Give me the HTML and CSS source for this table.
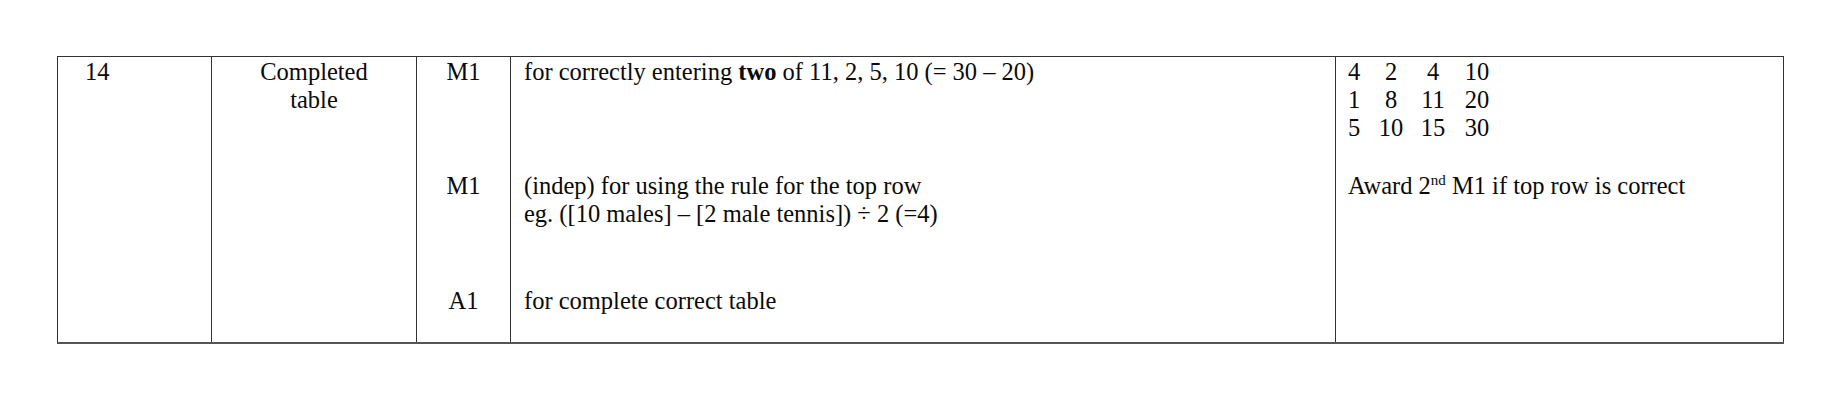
FILE: index.html
```html
<!DOCTYPE html>
<html>
<head>
<meta charset="utf-8">
<link rel="stylesheet" href="styles.css">
</head>
<body>
<table class="scheme">
  <colgroup>
    <col class="c-q">
    <col class="c-work">
    <col class="c-mark">
    <col class="c-notes">
    <col class="c-ans">
  </colgroup>
  <tr class="r1">
    <td class="q">14</td>
    <td class="work">Completed<br>table</td>
    <td class="mark">M1</td>
    <td class="notes">for correctly entering <b>two</b> of 11, 2, 5, 10 (= 30 – 20)</td>
    <td class="ans">
      <div class="grid">
        <span>4</span><span>2</span><span>4</span><span>10</span>
        <span>1</span><span>8</span><span>11</span><span>20</span>
        <span>5</span><span>10</span><span>15</span><span>30</span>
      </div>
    </td>
  </tr>
  <tr class="r2">
    <td class="q"></td>
    <td class="work"></td>
    <td class="mark">M1</td>
    <td class="notes">(indep) for using the rule for the top row<br>eg. ([10 males] – [2 male tennis]) ÷ 2 (=4)</td>
    <td class="ans">Award 2<sup>nd</sup> M1 if top row is correct</td>
  </tr>
  <tr class="r3">
    <td class="q"></td>
    <td class="work"></td>
    <td class="mark">A1</td>
    <td class="notes">for complete correct table</td>
    <td class="ans"></td>
  </tr>
</table>
</body>
</html>
```

FILE: styles.css
```css
html, body {
  margin: 0;
  padding: 0;
  background: #ffffff;
}
body {
  padding: 56px 0 0 57px;
  font-family: "Liberation Serif", "Times New Roman", serif;
  font-size: 24.5px;
  line-height: 28px;
  color: #0a0a0a;
}
.scheme {
  border-collapse: collapse;
  table-layout: fixed;
  width: 1727px;
  border-top: 1px solid #333333;
  border-left: 1px solid #333333;
  border-right: 1px solid #333333;
  border-bottom: 2px solid #555555;
}
.c-q { width: 154px; }
.c-work { width: 205px; }
.c-mark { width: 94px; }
.c-notes { width: 825px; }
.c-ans { width: 448px; }
.scheme td {
  vertical-align: top;
  padding: 1px 13px 0 13px;
  border-left: 1px solid #333333;
  border-right: 1px solid #333333;
  white-space: nowrap;
}
.r1 td { height: 113px; }
.r2 td { height: 114px; }
.r3 td { height: 55px; }
.scheme td.q { padding-left: 27px; }
.scheme td.ans { padding-left: 12px; }
.work, .mark { text-align: center; }
.grid {
  display: grid;
  grid-template-columns: 12px 62px 22px 66px;
  justify-items: center;
}
sup {
  font-size: 15px;
  line-height: 0;
  vertical-align: 9px;
}
```
